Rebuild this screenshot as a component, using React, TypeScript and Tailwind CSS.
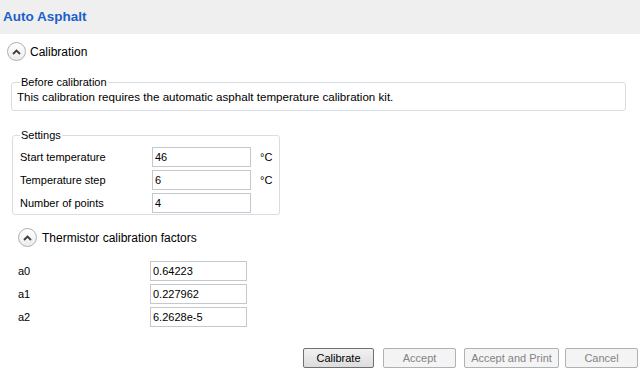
import React from "react";

const font = { fontFamily: '"Liberation Sans", Arial, sans-serif' };

// round collapse button used by the expandable sections
function CollapseButton() {
  return (
    <span className="flex h-[19px] w-[19px] items-center justify-center rounded-full border border-[#b0b0b0] bg-gradient-to-b from-white to-[#ececec]">
      <svg width="9" height="6" viewBox="0 0 9 6">
        <path d="M1 5 L4.5 1.5 L8 5" fill="none" stroke="#3c3c3c" strokeWidth="1.8" />
      </svg>
    </span>
  );
}

function Field({ value, width }: { value: string; width: string }) {
  return (
    <div className={`${width} flex h-[20px] items-center border border-[#c5c8cc] bg-white pl-[2px] text-[11px] text-black`}>
      {value}
    </div>
  );
}

const settings = [
  { label: "Start temperature", value: "46", unit: "°C" },
  { label: "Temperature step", value: "6", unit: "°C" },
  { label: "Number of points", value: "4", unit: "" },
];

const factors = [
  { label: "a0", value: "0.64223" },
  { label: "a1", value: "0.227962" },
  { label: "a2", value: "6.2628e-5" },
];

export default function App() {
  return (
    <div className="flex h-[374px] w-[640px] flex-col bg-white text-[11px] text-black" style={font}>
      {/* title bar */}
      <div className="flex h-[34px] items-center bg-[#efefef] pl-[3px] text-[13.5px] font-bold text-[#1c5fc9]">
        Auto Asphalt
      </div>

      {/* Calibration section */}
      <div className="ml-[7px] mt-[8px] flex items-center gap-[4px]">
        <CollapseButton />
        <span className="text-[12px]">Calibration</span>
      </div>

      <fieldset className="ml-[11px] mt-[14px] w-[615px] rounded-[3px] border border-[#d5dde5] px-[5px] pb-[5px]">
        <legend className="ml-[3px] px-px leading-[14px]">Before calibration</legend>
        <div className="text-[11.6px] leading-[16px]">This calibration requires the automatic asphalt temperature calibration kit.</div>
      </fieldset>

      <fieldset className="ml-[12px] mt-[17px] w-[268px] rounded-[3px] border border-[#d5dde5] pb-[1px] pl-[7px] pt-[5px]">
        <legend className="ml-[0px] px-px leading-[14px]">Settings</legend>
        <div className="flex flex-col gap-[3px]">
          {settings.map((s) => (
            <div key={s.label} className="flex items-center">
              <span className="w-[132px]">{s.label}</span>
              <Field value={s.value} width="w-[99px]" />
              <span className="ml-[9px]">{s.unit}</span>
            </div>
          ))}
        </div>
      </fieldset>

      {/* Thermistor section */}
      <div className="ml-[18px] mt-[13px] flex items-center gap-[5px]">
        <CollapseButton />
        <span className="text-[12px]">Thermistor calibration factors</span>
      </div>

      <div className="ml-[18px] mt-[14px] flex flex-col gap-[3px]">
        {factors.map((f) => (
          <div key={f.label} className="flex items-center">
            <span className="w-[132px]">{f.label}</span>
            <Field value={f.value} width="w-[97px]" />
          </div>
        ))}
      </div>

      {/* action buttons */}
      <div className="mt-[21px] flex justify-end pr-[2px]">
        <button className="h-[20px] w-[71px] rounded-[2px] border border-[#707070] bg-gradient-to-b from-[#f2f2f2] to-[#dcdcdc] text-[11px] text-black">
          Calibrate
        </button>
        <button disabled className="ml-[9px] h-[20px] w-[73px] rounded-[2px] border border-[#adb2b5] bg-[#f4f4f4] text-[11px] text-[#838383]">
          Accept
        </button>
        <button disabled className="ml-[8px] h-[20px] w-[95px] rounded-[2px] border border-[#adb2b5] bg-[#f4f4f4] text-[11px] text-[#838383]">
          Accept and Print
        </button>
        <button disabled className="ml-[6px] h-[20px] w-[73px] rounded-[2px] border border-[#adb2b5] bg-[#f4f4f4] text-[11px] text-[#838383]">
          Cancel
        </button>
      </div>
    </div>
  );
}
